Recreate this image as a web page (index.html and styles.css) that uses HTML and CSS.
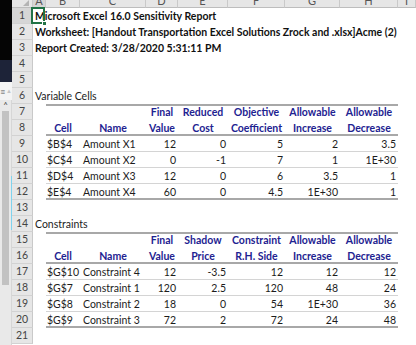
FILE: index.html
```html
<!DOCTYPE html>
<html lang="en">
<head>
<meta charset="UTF-8">
<meta name="viewport" content="width=device-width, initial-scale=1.0">
<title>Sensitivity Report</title>
<link rel="stylesheet" href="styles.css">
</head>
<body>

<div class="screen">
  <div class="side">
    <div class="side-dark"></div>
    <div class="side-navy"></div>
    <div class="side-tools"><span class="menu">&#8801;</span><span class="warn">&#9650;</span></div>
    <div class="side-scroll">
      <div class="track">
        <span class="up">&#708;</span>
        <div class="thumb"></div>
      </div>
      <div class="edge"><div class="edge-mark"></div></div>
    </div>
  </div>

  <div class="sheet">
    <div class="row head">
      <div class="corner">
        <svg width="21" height="7" viewBox="0 0 21 7"><polygon points="17,0 17,6 11,6" fill="#b4b4b4"/></svg>
      </div>
      <div class="col sel-col"><span>A</span></div>
      <div class="col"><span>B</span></div>
      <div class="col"><span>C</span></div>
      <div class="col"><span>D</span></div>
      <div class="col"><span>E</span></div>
      <div class="col"><span>F</span></div>
      <div class="col"><span>G</span></div>
      <div class="col"><span>H</span></div>
      <div class="col"><span>I</span></div>
    </div>

    <div class="row">
      <div class="rh sel-row">1</div>
      <div class="txt bold a1"><span class="sel"></span>Microsoft Excel 16.0 Sensitivity Report</div>
    </div>
    <div class="row">
      <div class="rh">2</div>
      <div class="txt bold">Worksheet: [Handout Transportation Excel Solutions Zrock and .xlsx]Acme (2)</div>
    </div>
    <div class="row">
      <div class="rh">3</div>
      <div class="txt bold">Report Created: 3/28/2020 5:31:11 PM</div>
    </div>
    <div class="row"><div class="rh">4</div></div>
    <div class="row"><div class="rh">5</div></div>
    <div class="row">
      <div class="rh">6</div>
      <div class="txt">Variable Cells</div>
    </div>

    <div class="row top">
      <div class="rh">7</div><div></div>
      <div class="v"></div><div class="v"></div>
      <div class="v h">Final</div><div class="v h">Reduced</div><div class="v h">Objective</div>
      <div class="v h">Allowable</div><div class="v h">Allowable</div>
    </div>
    <div class="row hb">
      <div class="rh">8</div><div></div>
      <div class="v h">Cell</div><div class="v h">Name</div>
      <div class="v h">Value</div><div class="v h">Cost</div><div class="v h">Coefficient</div>
      <div class="v h">Increase</div><div class="v h">Decrease</div>
    </div>
    <div class="row sep">
      <div class="rh">9</div><div></div>
      <div class="v l">$B$4</div><div class="v n">Amount X1</div>
      <div class="v r">12</div><div class="v r">0</div><div class="v r">5</div><div class="v r">2</div><div class="v r">3.5</div>
    </div>
    <div class="row sep">
      <div class="rh">10</div><div></div>
      <div class="v l">$C$4</div><div class="v n">Amount X2</div>
      <div class="v r">0</div><div class="v r">-1</div><div class="v r">7</div><div class="v r">1</div><div class="v r">1E+30</div>
    </div>
    <div class="row sep">
      <div class="rh">11</div><div></div>
      <div class="v l">$D$4</div><div class="v n">Amount X3</div>
      <div class="v r">12</div><div class="v r">0</div><div class="v r">6</div><div class="v r">3.5</div><div class="v r">1</div>
    </div>
    <div class="row bot">
      <div class="rh">12</div><div></div>
      <div class="v l">$E$4</div><div class="v n">Amount X4</div>
      <div class="v r">60</div><div class="v r">0</div><div class="v r">4.5</div><div class="v r">1E+30</div><div class="v r">1</div>
    </div>

    <div class="row"><div class="rh">13</div></div>
    <div class="row">
      <div class="rh">14</div>
      <div class="txt">Constraints</div>
    </div>

    <div class="row top">
      <div class="rh">15</div><div></div>
      <div class="v"></div><div class="v"></div>
      <div class="v h">Final</div><div class="v h">Shadow</div><div class="v h">Constraint</div>
      <div class="v h">Allowable</div><div class="v h">Allowable</div>
    </div>
    <div class="row hb">
      <div class="rh">16</div><div></div>
      <div class="v h">Cell</div><div class="v h">Name</div>
      <div class="v h">Value</div><div class="v h">Price</div><div class="v h">R.H. Side</div>
      <div class="v h">Increase</div><div class="v h">Decrease</div>
    </div>
    <div class="row sep">
      <div class="rh">17</div><div></div>
      <div class="v l">$G$10</div><div class="v n">Constraint 4</div>
      <div class="v r">12</div><div class="v r">-3.5</div><div class="v r">12</div><div class="v r">12</div><div class="v r">12</div>
    </div>
    <div class="row sep">
      <div class="rh">18</div><div></div>
      <div class="v l">$G$7</div><div class="v n">Constraint 1</div>
      <div class="v r">120</div><div class="v r">2.5</div><div class="v r">120</div><div class="v r">48</div><div class="v r">24</div>
    </div>
    <div class="row sep">
      <div class="rh">19</div><div></div>
      <div class="v l">$G$8</div><div class="v n">Constraint 2</div>
      <div class="v r">18</div><div class="v r">0</div><div class="v r">54</div><div class="v r">1E+30</div><div class="v r">36</div>
    </div>
    <div class="row bot">
      <div class="rh">20</div><div></div>
      <div class="v l">$G$9</div><div class="v n">Constraint 3</div>
      <div class="v r">72</div><div class="v r">2</div><div class="v r">72</div><div class="v r">24</div><div class="v r">48</div>
    </div>

    <div class="row"><div class="rh">21</div></div>
  </div>
</div>

</body>
</html>
```

FILE: styles.css
```css
body {
  margin: 0;
  background-color: #fff;
  font-family: Lato, "Liberation Sans", sans-serif;
  font-size: 10.5px;
  color: #1c1c1c;
  overflow: hidden;
}
.screen {
  display: flex;
  height: 345px;
}

/* left strip (other window edge) */
.side {
  width: 12px;
  flex: none;
  display: flex;
  flex-direction: column;
}
.side-dark {
  height: 60px;
  background-color: #050505;
}
.side-navy {
  height: 22px;
  background-color: #1d2338;
}
.side-tools {
  height: 18px;
  background-color: #f4f4f4;
  display: flex;
  align-items: center;
  font-size: 9px;
  line-height: 1;
}
.menu {
  color: #555;
  width: 6px;
  overflow: hidden;
}
.warn {
  color: #c4c4c4;
  font-size: 6px;
}
.side-scroll {
  flex: 1;
  display: grid;
  grid-template-columns: 11px 1px;
  background-color: #e9e9e9;
}
.track {
  display: flex;
  flex-direction: column;
  align-items: center;
}
.up {
  color: #444;
  font-size: 9px;
  line-height: 8px;
  height: 7px;
  margin-top: 2px;
}
.thumb {
  width: 7px;
  height: 174px;
  margin-top: 2px;
  background-color: #c2c2c2;
}
.edge {
  background-color: #d6d6d6;
}
.edge-mark {
  margin-top: 76px;
  height: 54px;
  background-color: #7fd3ee;
}

/* sheet grid */
.sheet {
  flex: 1;
  display: flex;
  flex-direction: column;
}
.row {
  display: grid;
  grid-template-columns: 21px 13px 34px 66px 32px 50px 57px 55px 58px 1fr;
  height: 16px;
  line-height: 16px;
  white-space: nowrap;
}
.head {
  height: 8px;
}
.corner {
  background-color: #e6e6e6;
  border-right: 1px solid #c9c9c9;
  border-bottom: 1px solid #bdbdbd;
}
.corner svg {
  display: block;
}
.col {
  background-color: #e6e6e6;
  color: #555;
  font-size: 11px;
  border-right: 1px solid #c9c9c9;
  border-bottom: 1px solid #bdbdbd;
  display: flex;
  align-items: flex-end;
  justify-content: center;
  overflow: hidden;
}
.col span {
  line-height: 13px;
}
.sel-col {
  background-color: #d6d6d6;
}
.rh {
  background-color: #e6e6e6;
  color: #444;
  text-align: center;
  line-height: 15px;
  border-bottom: 1px solid #d2d2d2;
  border-right: 1px solid #c9c9c9;
}
.sel-row {
  background-color: #d6d6d6;
}
.txt {
  grid-column: 2 / -1;
  padding-left: 2px;
}
.bold {
  font-weight: 700;
  color: #111;
}
.a1 {
  position: relative;
}
.sel {
  position: absolute;
  left: -2px;
  top: -1px;
  width: 10px;
  height: 13px;
  border: 2px solid #217346;
}
.sel::after {
  content: "";
  position: absolute;
  right: -4px;
  bottom: -4px;
  width: 3px;
  height: 3px;
  background-color: #217346;
  border: 1px solid #fff;
}

/* report tables */
.v {
  padding: 0 2px;
}
.h {
  text-align: center;
  font-weight: 700;
  color: #1e2391;
}
.l {
  text-align: left;
  padding-left: 1px;
}
.n {
  text-align: left;
  padding-left: 3px;
}
.r {
  text-align: right;
}
.top .v {
  box-shadow: inset 0 2px 0 #a8a8a8;
}
.hb .v {
  box-shadow: inset 0 -2px 0 #a8a8a8;
}
.sep .v {
  box-shadow: inset 0 -1px 0 #d4d4d4;
}
.bot .v {
  box-shadow: inset 0 -2px 0 #a8a8a8;
}
```
